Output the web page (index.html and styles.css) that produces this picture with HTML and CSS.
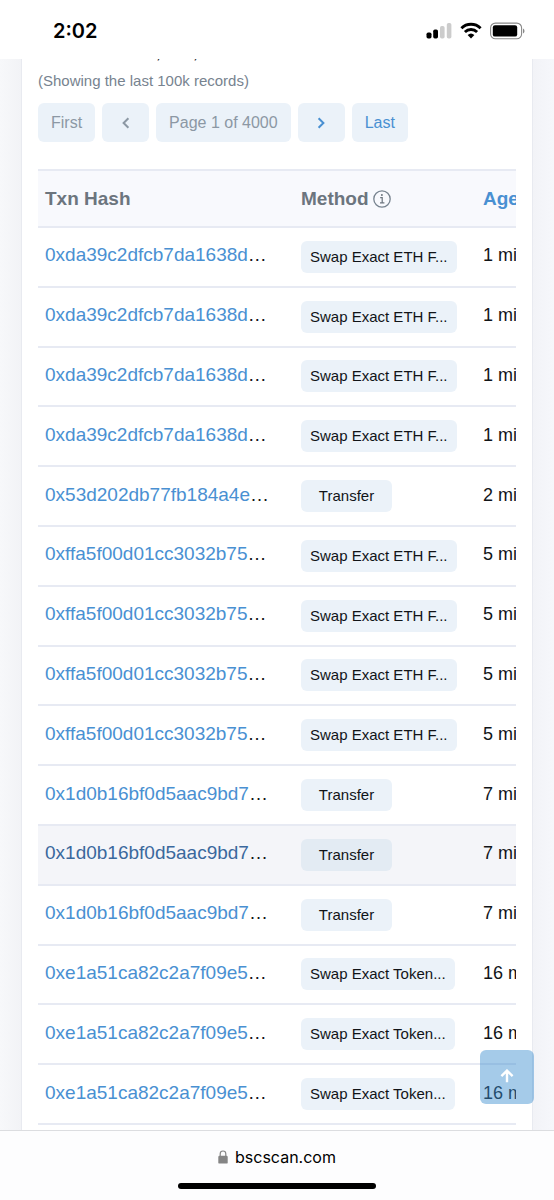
FILE: index.html
```
<!DOCTYPE html>
<html lang="en">
<head>
<meta charset="utf-8">
<meta name="viewport" content="width=device-width, initial-scale=1">
<title>Transactions</title>
<link rel="stylesheet" href="styles.css">
</head>
<body>
<header class="status">
  <time class="clock">2:02</time>
  <div class="status-icons">
    <svg width="26" height="18" viewBox="0 0 26 18" aria-hidden="true"><rect x="0.5" y="10.5" width="5" height="6" rx="1.7"/><rect x="7.2" y="7.5" width="4.8" height="9" rx="1.7"/><g fill="#ccc"><rect x="14" y="4" width="4.6" height="12.5" rx="1.7"/><rect x="20.8" y="1" width="4.6" height="15.5" rx="1.7"/></g></svg>
    <svg width="22" height="18" viewBox="0 0 22 18" aria-hidden="true"><g fill="none" stroke="#000" stroke-width="2.9"><path d="M1.4 6.2a13.8 13.8 0 0 1 19.2 0"/><path d="M4.9 10a8.8 8.8 0 0 1 12.2 0"/></g><path d="M7.6 13a5 5 0 0 1 6.8 0L11 16.5z"/></svg>
    <svg width="35" height="18" viewBox="0 0 35 18" aria-hidden="true"><rect x=".6" y="1.1" width="31" height="15.6" rx="4.8" fill="none" stroke="#888" stroke-width="1.1"/><rect x="2.8" y="3.2" width="24.4" height="11.4" rx="2.2"/><path d="M33 6.4a2.8 2.8 0 0 1 0 5z" fill="#888"/></svg>
  </div>
</header>
<main class="viewport">
  <section class="card">
    <p class="total">More than &gt; 1,000,000 transactions found</p>
    <p class="note">(Showing the last 100k records)</p>
    <nav class="pager" aria-label="Pages">
      <button class="page" type="button" disabled>First</button>
      <button class="page page-arrow" type="button" disabled aria-label="Previous"><svg width="8" height="12" viewBox="0 0 8 12"><path d="M6.4 1.2 1.6 6l4.8 4.8"/></svg></button>
      <span class="page">Page 1 of 4000</span>
      <button class="page page-arrow active" type="button" aria-label="Next"><svg width="8" height="12" viewBox="0 0 8 12"><path d="M1.6 1.2 6.4 6l-4.8 4.8"/></svg></button>
      <button class="page active" type="button">Last</button>
    </nav>
    <div class="table-scroll">
      <table class="txns">
        <colgroup><col class="col-hash"><col class="col-method"><col class="col-age"></colgroup>
        <thead>
          <tr><th>Txn Hash</th><th><span class="method-head">Method <svg width="18" height="18" viewBox="0 0 18 18" aria-hidden="true"><circle cx="9" cy="9" r="8.2" fill="none" stroke="#77838f" stroke-width="1.3"/><circle cx="8.9" cy="5" r="1" fill="#6c757e"/><path d="M7.2 7.7h2v5M7 12.9h4.4" fill="none" stroke="#6c757e" stroke-width="1.2"/></svg></span></th><th><a href="#age">Age</a></th></tr>
        </thead>
        <tbody>
          <tr><td class="hash"><a href="#tx">0xda39c2dfcb7da1638d</a>…</td><td><span class="badge">Swap Exact ETH F...</span></td><td class="age">1 min ago</td></tr>
          <tr><td class="hash"><a href="#tx">0xda39c2dfcb7da1638d</a>…</td><td><span class="badge">Swap Exact ETH F...</span></td><td class="age">1 min ago</td></tr>
          <tr><td class="hash"><a href="#tx">0xda39c2dfcb7da1638d</a>…</td><td><span class="badge">Swap Exact ETH F...</span></td><td class="age">1 min ago</td></tr>
          <tr><td class="hash"><a href="#tx">0xda39c2dfcb7da1638d</a>…</td><td><span class="badge">Swap Exact ETH F...</span></td><td class="age">1 min ago</td></tr>
          <tr><td class="hash"><a href="#tx">0x53d202db77fb184a4e</a>…</td><td><span class="badge">Transfer</span></td><td class="age">2 mins ago</td></tr>
          <tr><td class="hash"><a href="#tx">0xffa5f00d01cc3032b75</a>…</td><td><span class="badge">Swap Exact ETH F...</span></td><td class="age">5 mins ago</td></tr>
          <tr><td class="hash"><a href="#tx">0xffa5f00d01cc3032b75</a>…</td><td><span class="badge">Swap Exact ETH F...</span></td><td class="age">5 mins ago</td></tr>
          <tr><td class="hash"><a href="#tx">0xffa5f00d01cc3032b75</a>…</td><td><span class="badge">Swap Exact ETH F...</span></td><td class="age">5 mins ago</td></tr>
          <tr><td class="hash"><a href="#tx">0xffa5f00d01cc3032b75</a>…</td><td><span class="badge">Swap Exact ETH F...</span></td><td class="age">5 mins ago</td></tr>
          <tr><td class="hash"><a href="#tx">0x1d0b16bf0d5aac9bd7</a>…</td><td><span class="badge">Transfer</span></td><td class="age">7 mins ago</td></tr>
          <tr class="selected"><td class="hash"><a href="#tx">0x1d0b16bf0d5aac9bd7</a>…</td><td><span class="badge">Transfer</span></td><td class="age">7 mins ago</td></tr>
          <tr><td class="hash"><a href="#tx">0x1d0b16bf0d5aac9bd7</a>…</td><td><span class="badge">Transfer</span></td><td class="age">7 mins ago</td></tr>
          <tr><td class="hash"><a href="#tx">0xe1a51ca82c2a7f09e5</a>…</td><td><span class="badge">Swap Exact Token...</span></td><td class="age">16 mins ago</td></tr>
          <tr><td class="hash"><a href="#tx">0xe1a51ca82c2a7f09e5</a>…</td><td><span class="badge">Swap Exact Token...</span></td><td class="age">16 mins ago</td></tr>
          <tr><td class="hash"><a href="#tx">0xe1a51ca82c2a7f09e5</a>…</td><td><span class="badge">Swap Exact Token...</span></td><td class="age">16 mins ago</td></tr>
        </tbody>
      </table>
    </div>
  </section>
  <button class="to-top" type="button" aria-label="Back to top"><svg width="14" height="14" viewBox="0 0 14 14"><path d="M7 13.2V2M1.4 7.2 7 1.6l5.6 5.6"/></svg></button>
</main>
<footer class="browser-bar">
  <div class="address">
    <svg width="10" height="14" viewBox="0 0 10 14" aria-hidden="true"><rect x=".3" y="5.8" width="9.4" height="7.8" rx="1.2" fill="#858585"/><path d="M2.2 6V3.8a2.8 2.8 0 0 1 5.6 0V6" fill="none" stroke="#858585" stroke-width="1.2"/></svg>
    <span>bscscan.com</span>
  </div>
  <div class="home-indicator"></div>
</footer>
</body>
</html>
```
FILE: styles.css
```
* { box-sizing: border-box; }

body {
  margin: 0;
  height: 100vh;
  display: flex;
  flex-direction: column;
  overflow: hidden;
  background: #fff;
  color: #111418;
  font: 19px/22px "Liberation Sans", Arial, sans-serif;
}

a { color: #4990d2; text-decoration: none; }

p { margin: 0; }

.status {
  flex: none;
  display: flex;
  justify-content: space-between;
  align-items: center;
  padding: 17px 29px 14px 53px;
  color: #000;
}

.clock { font: 600 20px/28px Inter, sans-serif; }

.status-icons { display: flex; align-items: center; gap: 8px; }

.viewport {
  position: relative;
  flex: 1;
  min-height: 0;
  display: flex;
  overflow: hidden;
  padding: 0 21px;
  background: linear-gradient(to right, #f7f8fa, #f2f3f6 21px, #f2f3f7 calc(100% - 21px), #f6f7fb);
}

.card {
  flex: 1;
  min-width: 0;
  display: flex;
  flex-direction: column;
  margin-top: -18px;
  padding: 0 16px 5px;
  background: #fff;
  border: solid #e8eaf0;
  border-width: 0 1px;
}

.note {
  margin-top: 7px;
  color: #77838f;
  font-size: 15px;
}

.pager {
  display: flex;
  gap: 7px;
  margin: 11px 0 27px;
}

.page {
  display: flex;
  align-items: center;
  justify-content: center;
  height: 39px;
  padding: 0 13px;
  border: 0;
  border-radius: 6px;
  background: #ebf2f9;
  color: #8c98a4;
  font: 16px/20px "Liberation Sans", Arial, sans-serif;
}

.page-arrow { width: 47px; }

.page path {
  fill: none;
  stroke: currentColor;
  stroke-width: 2;
}

.page.active { color: #4990d2; }

.table-scroll {
  flex: 1;
  overflow: hidden;
}

.txns {
  table-layout: fixed;
  width: 640px;
  height: 100%;
  border-collapse: separate;
  border-spacing: 0;
}

.col-hash { width: 256px; }
.col-method { width: 182px; }

.txns th {
  height: 59px;
  padding: 0 7px;
  border: solid #e7eaf3;
  border-width: 2px 0;
  background: #f8f9fd;
  color: #6c757e;
  text-align: left;
}

.method-head { display: flex; align-items: center; gap: 4px; }

.txns td {
  padding: 0 7px;
  border-bottom: 2px solid #e7eaf3;
  white-space: nowrap;
}

.txns .hash,
.txns .age { padding-bottom: 3px; }

.txns .age { font-size: 18px; }

.badge {
  display: block;
  width: fit-content;
  min-width: 91px;
  padding: 5px 9px;
  border-radius: 6px;
  background: #ebf2f9;
  text-align: center;
  font-size: 15px;
}

.selected td { background: #f4f5f9; }
.selected a { color: #3a689d; }
.selected .badge { background: #e3ebf3; }

.to-top {
  position: absolute;
  right: 20px;
  bottom: 26px;
  width: 54px;
  height: 54px;
  padding: 0;
  border: 0;
  border-radius: 6px;
  background: rgba(55, 140, 207, 0.45);
}

.to-top path {
  fill: none;
  stroke: #fff;
  stroke-width: 2.4;
}

.browser-bar {
  flex: none;
  display: flex;
  flex-direction: column;
  align-items: center;
  gap: 14px;
  padding: 14px 0 11px;
  border-top: 1px solid #dcdde0;
  background: #fdfdfe;
  color: #000;
}

.address {
  display: flex;
  align-items: center;
  gap: 7px;
  font: 16px/24px Inter, sans-serif;
}

.home-indicator {
  width: 198px;
  height: 6px;
  border-radius: 3px;
  background: #000;
}
```
